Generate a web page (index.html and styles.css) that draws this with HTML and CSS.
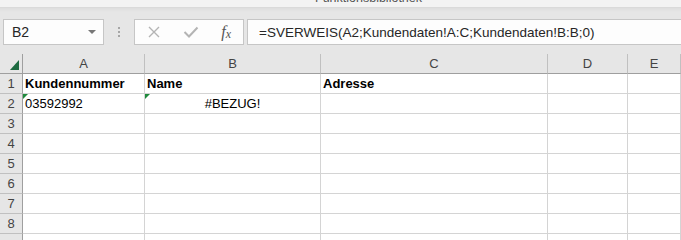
FILE: index.html
```html
<!DOCTYPE html>
<html lang="de">
<head>
  <meta charset="UTF-8" />
  <title>Kundendaten - Excel</title>
  <link rel="stylesheet" href="styles.css">
</head>
<body>
  <div class="ribbon-edge">
    <span class="group-label">Funktionsbibliothek</span>
  </div>

  <div class="formula-bar">
    <div class="name-box">
      <span>B2</span>
      <span class="caret"></span>
    </div>
    <div class="grip">
      <span></span><span></span><span></span>
    </div>
    <div class="fx-buttons">
      <svg class="icon" width="14" height="14" viewBox="0 0 14 14">
        <path d="M2 2 L12 12 M12 2 L2 12" stroke="#b4b4b4" stroke-width="1.4" fill="none" />
      </svg>
      <svg class="icon" width="16" height="14" viewBox="0 0 16 14">
        <path d="M1.5 7 L6 11.5 L14.5 2.5" stroke="#b4b4b4" stroke-width="2" fill="none" />
      </svg>
      <span class="fx">f<sub>x</sub></span>
    </div>
    <div class="formula-input">=SVERWEIS(A2;Kundendaten!A:C;Kundendaten!B:B;0)</div>
  </div>

  <div class="sheet">
    <div class="corner"><span class="select-all"></span></div>
    <div class="col-head">A</div>
    <div class="col-head">B</div>
    <div class="col-head">C</div>
    <div class="col-head">D</div>
    <div class="col-head">E</div>

    <div class="row-head">1</div>
    <div class="cell bold">Kundennummer</div>
    <div class="cell bold">Name</div>
    <div class="cell bold">Adresse</div>
    <div class="cell"></div>
    <div class="cell"></div>

    <div class="row-head">2</div>
    <div class="cell flagged">03592992</div>
    <div class="cell flagged center">#BEZUG!</div>
    <div class="cell"></div>
    <div class="cell"></div>
    <div class="cell"></div>

    <div class="row-head">3</div>
    <div class="cell"></div><div class="cell"></div><div class="cell"></div><div class="cell"></div><div class="cell"></div>
    <div class="row-head">4</div>
    <div class="cell"></div><div class="cell"></div><div class="cell"></div><div class="cell"></div><div class="cell"></div>
    <div class="row-head">5</div>
    <div class="cell"></div><div class="cell"></div><div class="cell"></div><div class="cell"></div><div class="cell"></div>
    <div class="row-head">6</div>
    <div class="cell"></div><div class="cell"></div><div class="cell"></div><div class="cell"></div><div class="cell"></div>
    <div class="row-head">7</div>
    <div class="cell"></div><div class="cell"></div><div class="cell"></div><div class="cell"></div><div class="cell"></div>
    <div class="row-head">8</div>
    <div class="cell"></div><div class="cell"></div><div class="cell"></div><div class="cell"></div><div class="cell"></div>
    <div class="row-head"></div>
    <div class="cell"></div><div class="cell"></div><div class="cell"></div><div class="cell"></div><div class="cell"></div>
  </div>
</body>
</html>
```

FILE: styles.css
```css
body {
  margin: 0;
  font-family: 'Liberation Sans', Arial, sans-serif;
  background-color: #e6e6e6;
  color: #000;
  overflow: hidden;
}

.ribbon-edge {
  height: 7px;
  background: #f3f3f3;
  overflow: hidden;
  border-bottom: 1px solid #dadada;
}

.group-label {
  display: block;
  margin: -9px 0 0 315px;
  font-size: 12.5px;
  line-height: 14px;
  color: #555;
}

.formula-bar {
  display: flex;
  align-items: center;
  height: 46px;
  padding-left: 3px;
  background: linear-gradient(#dedede, #e6e6e6 4px);
}

.name-box {
  box-sizing: border-box;
  width: 101px;
  height: 26px;
  margin-top: 2px;
  padding: 0 7px 0 8px;
  display: flex;
  align-items: center;
  justify-content: space-between;
  background: #fdfdfd;
  border: 1px solid #c6c6c6;
  font-size: 14px;
  color: #262626;
}

.caret {
  width: 0;
  height: 0;
  border-left: 4px solid transparent;
  border-right: 4px solid transparent;
  border-top: 4px solid #777;
}

.grip {
  display: flex;
  flex-direction: column;
  gap: 2px;
  margin: 2px 0 0 14px;
}

.grip span {
  width: 2px;
  height: 2px;
  background: #a6a6a6;
}

.fx-buttons {
  box-sizing: border-box;
  width: 110px;
  height: 26px;
  margin: 2px 0 0 14px;
  padding: 0 12px;
  display: flex;
  align-items: center;
  justify-content: space-between;
  background: #fdfdfd;
  border: 1px solid #c6c6c6;
}

.icon {
  display: block;
}

.fx {
  font-family: 'Liberation Serif', 'Times New Roman', serif;
  font-style: italic;
  font-size: 16px;
  color: #555;
  line-height: 1;
}

.fx sub {
  font-size: 12px;
  vertical-align: -1px;
}

.formula-input {
  box-sizing: border-box;
  flex: 1;
  height: 26px;
  margin: 2px 0 0 3px;
  padding-left: 11px;
  display: flex;
  align-items: center;
  background: #fdfdfd;
  border: 1px solid #c6c6c6;
  border-right: none;
  font-size: 13.5px;
  color: #262626;
  white-space: nowrap;
}

.sheet {
  display: grid;
  grid-template-columns: 23px 122px 176px 227px 80px 1fr;
  grid-auto-rows: 20px;
  background: #fff;
}

.corner,
.col-head,
.row-head {
  box-sizing: border-box;
  background: #e6e6e6;
  color: #444;
  font-size: 13px;
  display: flex;
  align-items: center;
  justify-content: center;
}

.corner {
  border-right: 1px solid #9f9f9f;
  border-bottom: 1px solid #9f9f9f;
}

.select-all {
  width: 0;
  height: 0;
  margin: 2px 0 0 6px;
  border-left: 9px solid transparent;
  border-bottom: 10px solid #1e6b41;
}

.col-head {
  border-right: 1px solid #c0c0c0;
  border-bottom: 1px solid #9f9f9f;
}

.row-head {
  border-right: 1px solid #9f9f9f;
  border-bottom: 1px solid #c0c0c0;
}

.cell {
  position: relative;
  box-sizing: border-box;
  padding: 0 2px 2px;
  border-right: 1px solid #d4d4d4;
  border-bottom: 1px solid #d4d4d4;
  font-size: 13px;
  display: flex;
  align-items: flex-end;
  white-space: nowrap;
}

.bold {
  font-weight: bold;
}

.center {
  justify-content: center;
}

.flagged::before {
  content: "";
  position: absolute;
  top: 0;
  left: 0;
  border-top: 5px solid #1f8a3c;
  border-right: 5px solid transparent;
}
```
